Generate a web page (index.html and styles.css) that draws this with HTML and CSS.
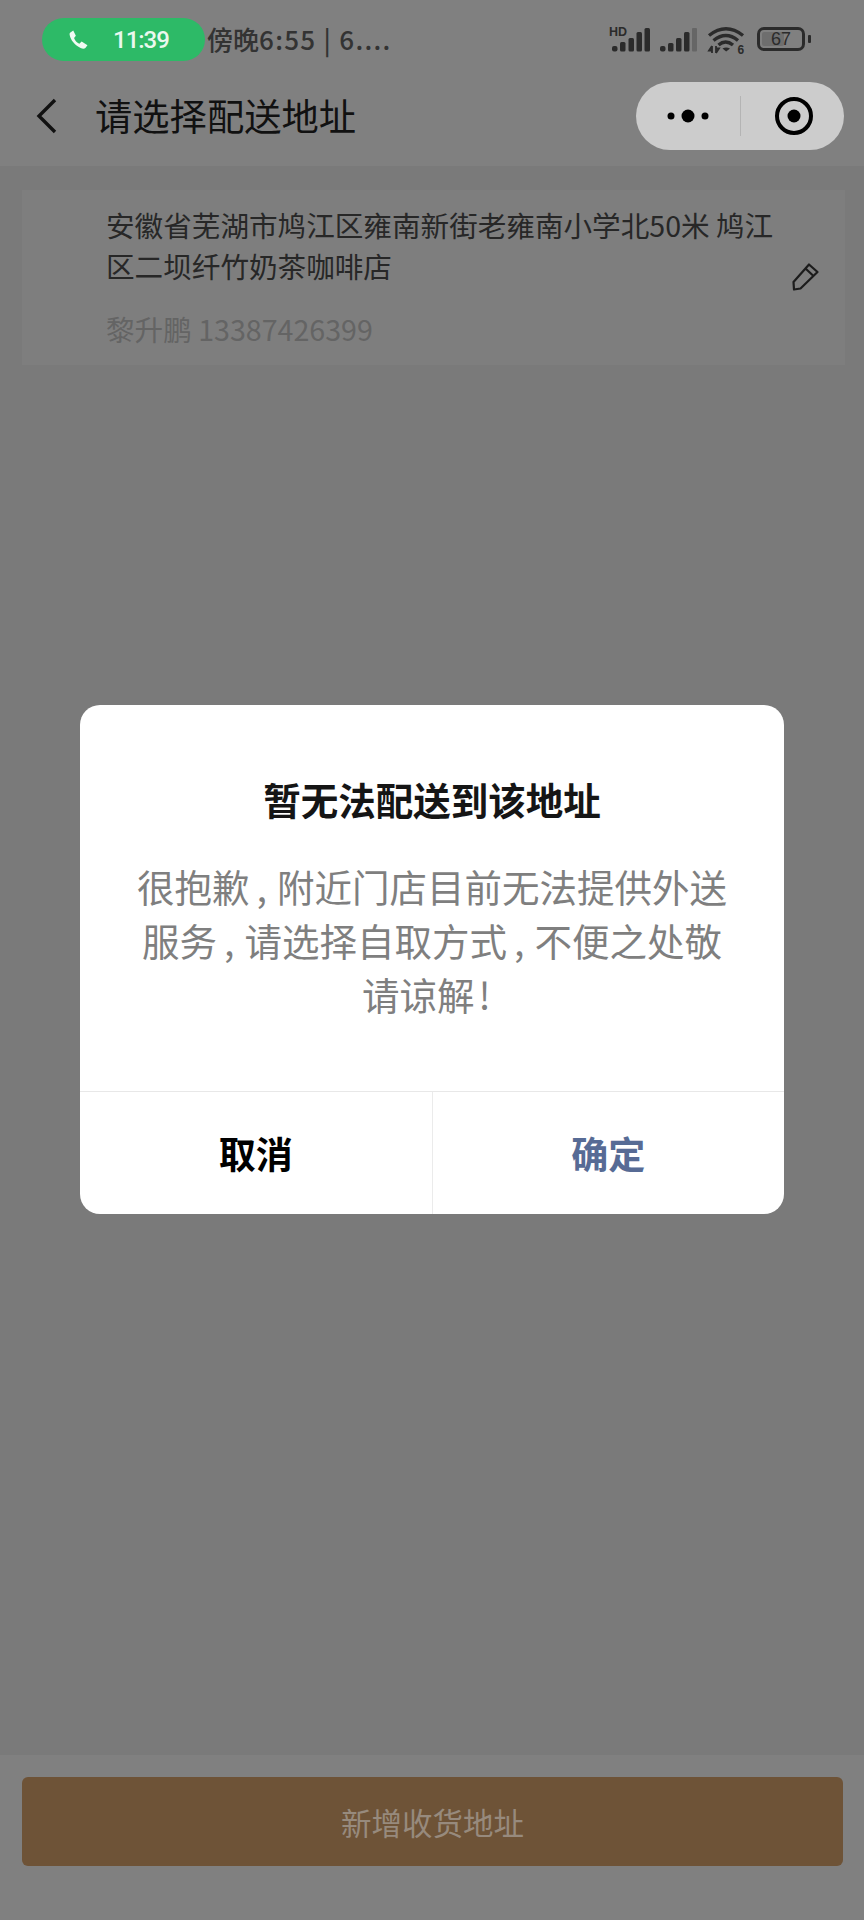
FILE: index.html
```html
<!DOCTYPE html>
<html lang="zh-CN">
<head>
<meta charset="utf-8">
<title>请选择配送地址</title>
<link rel="stylesheet" href="styles.css">
</head>
<body>
<div class="page">
  <header class="top">
    <div class="status">
      <div class="call">
        <svg class="call-icon" viewBox="0 0 18 18"><path d="M1 2.500 4 .5 6.500 5.500 4.800 7.500C5.500 10 7.500 12 9.800 13L12 11l5.500 3.500-2 2.500C14.500 18 13 18 11 17 5.500 14.500 1.500 9.500.7 5 .5 4 .5 3 1 2.500z" fill="#f1faf3"/></svg>
        <span class="call-time">11:39</span>
      </div>
      <span class="notice"><span class="notice-cjk">傍晚</span>6:55 | 6....</span>
      <div class="sys">
        <div class="sig-wrap">
          <span class="hd">HD</span>
          <svg class="sig-hd" viewBox="0 0 41 26">
            <g fill="#2b2b2b"><rect x="3" y="20" width="5.500" height="5.500" rx="2"/><rect x="11" y="16" width="5.500" height="9.500" rx="1.500"/><rect x="19.500" y="12" width="5.500" height="13.500" rx="1.500"/><rect x="27.500" y="6" width="5.500" height="19.500" rx="1.500"/><rect x="35.500" y="2" width="5.500" height="23.500" rx="1.500"/></g>
          </svg>
        </div>
        <svg class="sig" viewBox="0 0 38 26">
          <g fill="#2b2b2b"><rect x="0" y="20" width="5.500" height="5.500" rx="2"/><rect x="8" y="17" width="5.500" height="8.500" rx="1.500"/><rect x="16" y="12" width="5.500" height="13.500" rx="1.500"/><rect x="24" y="6" width="5.500" height="19.500" rx="1.500"/></g>
          <rect x="32" y="2" width="5" height="23.500" rx="1" fill="#666"/>
        </svg>
        <svg class="wifi" viewBox="0 0 38 28">
          <g fill="none" stroke="#2b2b2b" stroke-width="3.400"><path d="M2 9.500Q19-4 36 9.500"/><path d="M6.500 14.500Q19 4.500 31 14.500"/><path d="M11.500 19Q18.500 13 26 19"/></g>
          <path d="M15.500 22.500Q19 20.500 23 22.500L19.200 25.500z" fill="#2b2b2b"/>
          <path d="M5 20v7M5 20l-3 4.500h3M9 20v7M9 27l3-4.500H9" fill="none" stroke="#2b2b2b" stroke-width="1.800"/>
          <text x="30.500" y="27.500" class="six">6</text>
        </svg>
        <div class="battery">
          <div class="battery-body"><span class="battery-fill"></span><span class="battery-num">67</span></div>
          <span class="battery-tip"></span>
        </div>
      </div>
    </div>
    <nav class="nav">
      <svg class="back" viewBox="0 0 22 36"><path d="M19 2 3 18l16 16" fill="none" stroke="#111" stroke-width="3.400"/></svg>
      <h1 class="nav-title">请选择配送地址</h1>
      <div class="capsule">
        <svg class="dots" viewBox="0 0 42 14"><circle cx="4" cy="7" r="3.500"/><circle cx="21" cy="7" r="6.500"/><circle cx="38" cy="7" r="3.500"/></svg>
        <span class="cap-line"></span>
        <svg class="target" viewBox="0 0 40 40"><circle cx="20" cy="20" r="17" fill="none" stroke="#000" stroke-width="4"/><circle cx="20" cy="20" r="6.500"/></svg>
      </div>
    </nav>
  </header>

  <main class="content">
    <section class="card">
      <div class="card-text">
        <p class="addr">安徽省芜湖市鸠江区雍南新街老雍南小学北50米 鸠江</p>
        <p class="addr">区二坝纤竹奶茶咖啡店</p>
        <p class="person">黎升鹏 13387426399</p>
      </div>
      <svg class="pencil" viewBox="0 0 28 28"><path d="M17 1.500 25.500 9 8.500 25.500 2 26.500 1.500 19zM13.500 5.500 21.500 13" fill="none" stroke="#1c1c1c" stroke-width="2.200" stroke-linejoin="round"/></svg>
    </section>
  </main>

  <footer class="bottom">
    <div class="add-btn">新增收货地址</div>
  </footer>

  <div class="dialog">
    <div class="dialog-body">
      <h2 class="dialog-title">暂无法配送到该地址</h2>
      <div class="dialog-msg">
        <p class="msg-line">很抱歉<span class="comma">,</span>附近门店目前无法提供外送</p>
        <p class="msg-line">服务<span class="comma">,</span>请选择自取方式<span class="comma">,</span>不便之处敬</p>
        <p class="msg-line">请谅解<span class="comma mark">!</span></p>
      </div>
    </div>
    <div class="dialog-actions">
      <div class="act act-cancel">取消</div>
      <div class="act act-ok">确定</div>
    </div>
  </div>
</div>
</body>
</html>
```
FILE: styles.css
```css
* { box-sizing: border-box; }
html, body { margin: 0; padding: 0; }
body { font-family: "Noto Sans CJK SC", "Noto Sans", sans-serif; background: #808080; }
h1, h2, p { margin: 0; font-weight: 400; }

.page { position: relative; width: 864px; height: 1920px; display: flex; flex-direction: column; background: #808080; }

.top { height: 166px; flex: none; }
.status { height: 80px; display: flex; align-items: flex-start; padding: 18px 53px 0 42px; }
.call { width: 163px; height: 43px; border-radius: 22px; background: #2dba67; display: flex; align-items: center; padding-left: 27px; flex: none; }
.call-icon { width: 19px; height: 19px; }
.call-time { margin-left: 25px; color: #eaf8ee; font: 500 24px/1 Roboto, sans-serif; letter-spacing: -1px; }
.notice { margin-left: 2px; margin-top: 2px; font-size: 26px; font-weight: 500; line-height: 38px; color: #333; white-space: nowrap; letter-spacing: 1.300px; }
.notice-cjk { letter-spacing: 0; }
.sys { margin-left: auto; display: flex; align-items: flex-start; padding-top: 8px; }
.sig-wrap { position: relative; width: 41px; height: 26px; margin-right: 10px; }
.sig-hd { display: block; width: 41px; height: 26px; }
.hd { position: absolute; left: 0; top: 0; font: 700 12.500px/13px "Liberation Sans", sans-serif; color: #2b2b2b; }
.sig { width: 38px; height: 26px; margin-right: 9px; }
.wifi { width: 38px; height: 28px; margin-right: 12px; }
.six { font: 700 12px "Liberation Sans", sans-serif; fill: #2b2b2b; }
.battery { display: flex; align-items: center; height: 24px; margin-top: 1px; }
.battery-body { position: relative; width: 48px; height: 24px; border: 3px solid #2b2b2b; border-radius: 7px; display: flex; align-items: center; justify-content: center; }
.battery-fill { position: absolute; left: 2px; top: 2px; bottom: 2px; width: 22px; background: #6e6e6e; border-radius: 2px; }
.battery-num { position: relative; font: 400 18px/1 "Liberation Sans", sans-serif; color: #2b2b2b; }
.battery-tip { width: 3px; height: 8px; margin-left: 3px; background: #2b2b2b; border-radius: 1px; }

.nav { height: 86px; display: flex; align-items: flex-start; padding: 2px 20px 0 36px; }
.back { width: 22px; height: 36px; margin-top: 16px; flex: none; }
.nav-title { margin-left: 37px; margin-top: 7px; font-size: 37.300px; line-height: 52px; color: #111; white-space: nowrap; }
.capsule { margin-left: auto; width: 208px; height: 68px; border-radius: 34px; background: #cccccc; display: flex; align-items: center; padding-left: 31px; }
.dots { width: 42px; height: 14px; flex: none; }
.cap-line { width: 1px; height: 40px; margin-left: 31px; background: #b4b4b4; flex: none; }
.target { width: 40px; height: 40px; margin-left: 33px; flex: none; }

.content { flex: 1; min-height: 0; background: #7a7a7a; padding: 24px 19px 0 22px; }
.card { height: 175px; background: #7e7e7e; display: flex; align-items: flex-start; padding: 14px 25px 0 84px; }
.card-text { width: 680px; }
.addr { font-size: 28.600px; line-height: 41px; color: #272727; white-space: nowrap; }
.person { margin-top: 22px; font-size: 28.600px; line-height: 41px; color: #646464; }
.pencil { width: 28px; height: 28px; margin-left: auto; margin-top: 59px; flex: none; }

.bottom { height: 165px; flex: none; background: #808080; padding: 22px 21px 0 22px; }
.add-btn { height: 89px; background: #6e5337; border-radius: 6px; display: flex; align-items: center; justify-content: center; font-size: 30.500px; color: #978a7d; }

.dialog { position: absolute; left: 80px; top: 705px; width: 704px; height: 509px; background: #fff; border-radius: 20px; display: flex; flex-direction: column; overflow: hidden; }
.dialog-body { flex: 1; padding: 68px 48px 0; text-align: center; }
.dialog-title { font-size: 37.500px; line-height: 52px; font-weight: 700; color: #151515; }
.dialog-msg { margin-top: 34px; font-size: 37.500px; line-height: 54px; color: #7f7f7f; }
.msg-line { white-space: nowrap; }
.comma { display: inline-block; width: 27.500px; padding-left: 7px; text-align: left; }
.mark { padding-left: 4px; }
.dialog-actions { height: 123px; flex: none; display: grid; grid-template-columns: 352.500px 1fr; border-top: 1px solid #e8e8e8; }
.act { display: flex; align-items: center; justify-content: center; font-size: 37px; font-weight: 700; }
.act-cancel { color: #000; border-right: 1px solid #ebebeb; }
.act-ok { color: #576b95; }
```
